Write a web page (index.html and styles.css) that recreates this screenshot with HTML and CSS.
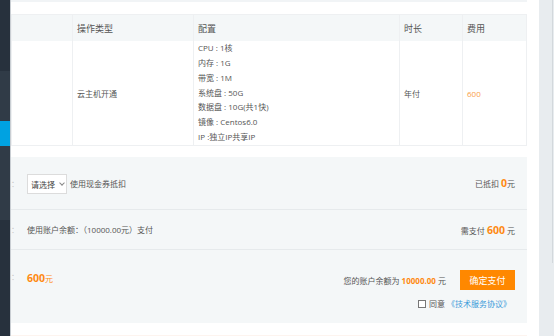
FILE: index.html
```html
<!DOCTYPE html>
<html lang="zh-CN">
<head>
    <meta charset="UTF-8">
    <meta name="viewport" content="width=device-width, initial-scale=1.0">
    <title>确认订单</title>
    <link rel="stylesheet" href="styles.css">
</head>
<body>
    <div class="layout">
        <!-- Left navigation strip -->
        <aside class="sidebar">
            <div class="nav nav-dark nav-top"></div>
            <div class="nav nav-mid nav-a"></div>
            <div class="nav nav-active"></div>
            <div class="nav nav-mid nav-b"></div>
            <div class="nav nav-dark nav-rest"></div>
        </aside>

        <!-- Order content -->
        <main class="content">
            <div class="prev-block"></div>

            <table class="order">
                <thead>
                    <tr>
                        <th class="c-id"></th>
                        <th class="c-type">操作类型</th>
                        <th class="c-conf">配置</th>
                        <th class="c-time">时长</th>
                        <th class="c-fee">费用</th>
                    </tr>
                </thead>
                <tbody>
                    <tr>
                        <td></td>
                        <td>云主机开通</td>
                        <td class="conf">
                            <p>CPU : 1核</p>
                            <p>内存 : 1G</p>
                            <p>带宽 : 1M</p>
                            <p>系统盘 : 50G</p>
                            <p>数据盘 : 10G(共1快)</p>
                            <p>镜像 : Centos6.0</p>
                            <p>IP :独立IP共享IP</p>
                        </td>
                        <td>年付</td>
                        <td class="fee">600</td>
                    </tr>
                </tbody>
            </table>

            <section class="pay">
                <div class="pay-row coupon">
                    <span class="lbl">：</span>
                    <div class="select">请选择 <span class="chev"></span></div>
                    <span class="hint">使用现金券抵扣</span>
                    <span class="right">已抵扣 <b class="num">0</b>元</span>
                </div>
                <div class="pay-row balance">
                    <span class="lbl">：</span>
                    <span class="hint">使用账户余额：（10000.00元）支付</span>
                    <span class="right">需支付 <b class="num">600</b> 元</span>
                </div>
                <div class="pay-row total">
                    <span class="lbl">：</span>
                    <span class="total-sum"><b class="num">600</b>元</span>
                    <div class="confirm">
                        <div class="confirm-line">
                            <span>您的账户余额为 <b class="bal">10000.00</b> 元</span>
                            <button class="pay-btn">确定支付</button>
                        </div>
                        <label class="agree">
                            <span class="box"></span>同意 <a href="#">《技术服务协议》</a>
                        </label>
                    </div>
                </div>
            </section>

            <div class="notice"></div>
        </main>

        <div class="gutter"><div class="thumb"></div></div>
    </div>
</body>
</html>
```

FILE: styles.css
```css
body {
    margin: 0;
    padding: 0;
    background-color: #fff;
    font-family: "Open Sans", "Noto Sans CJK SC", sans-serif;
    font-size: 8px;
    color: #555;
}
.layout {
    display: flex;
    height: 336px;
    overflow: hidden;
}
.sidebar {
    width: 10px;
    flex-shrink: 0;
    border-right: 1px solid #c9ced3;
    display: flex;
    flex-direction: column;
}
.nav-dark {
    background-color: #27313d;
}
.nav-mid {
    background-color: #303b47;
}
.nav-top {
    height: 71px;
}
.nav-a {
    height: 50px;
}
.nav-active {
    height: 25px;
    background-color: #00a2e1;
}
.nav-b {
    height: 74px;
}
.nav-rest {
    flex: 1;
}
.content {
    width: 516px;
    flex-shrink: 0;
    margin-right: 12px;
}
.prev-block {
    height: 2px;
    background-color: #f1f4f6;
}

/* order table */
.order {
    width: 100%;
    margin-top: 12px;
    border-collapse: collapse;
    table-layout: fixed;
    border: 1px solid #eef0f2;
}
.order th,
.order td {
    padding: 0 4px;
    text-align: left;
    border-left: 1px solid #eef0f2;
}
.order th {
    height: 26px;
    background-color: #f4f7f8;
    font-weight: normal;
    font-size: 9px;
    color: #555;
}
.order td {
    height: 104px;
    vertical-align: middle;
    color: #555;
}
.c-id { width: 52px; }
.c-type { width: 112px; }
.c-conf { width: 197px; }
.c-time { width: 54px; }
.conf p {
    margin: 0;
    line-height: 14.8px;
}
.order .fee {
    color: #f99d4a;
}

/* payment area */
.pay {
    margin-top: 11px;
    background-color: #f4f7f8;
}
.pay-row {
    display: flex;
    align-items: center;
    padding: 0 12px 0 0;
    color: #555;
}
.pay-row + .pay-row {
    border-top: 1px solid #e6eaec;
}
.lbl {
    width: 16px;
    color: #c8c8c8;
    flex-shrink: 0;
}
.coupon {
    height: 52px;
}
.balance {
    height: 39px;
}
.total {
    height: 73px;
    align-items: flex-start;
}
.select {
    width: 35px;
    height: 18px;
    border: 1px solid #dcdcdc;
    background-color: #fff;
    display: flex;
    align-items: center;
    padding-left: 3px;
    margin-right: 3px;
    margin-top: 2px;
    color: #444;
}
.chev {
    width: 3px;
    height: 3px;
    border-right: 1px solid #888;
    border-bottom: 1px solid #888;
    transform: rotate(45deg);
    margin: -2px 0 0 5px;
}
.right {
    margin-left: auto;
}
.num {
    color: #ff8a12;
    font-size: 10.5px;
    font-weight: bold;
}
.total .lbl,
.total-sum {
    margin-top: 21px;
}
.total-sum {
    color: #ff8a12;
}
.confirm {
    margin-left: auto;
    padding-top: 20px;
    display: flex;
    flex-direction: column;
    align-items: flex-end;
}
.confirm-line {
    display: flex;
    align-items: center;
    gap: 14px;
}
.bal {
    color: #ff8a12;
}
.pay-btn {
    width: 55px;
    height: 20px;
    border: none;
    padding: 0;
    background-color: #ff8800;
    color: #fff;
    font-family: inherit;
    font-size: 9px;
    cursor: pointer;
}
.agree {
    display: flex;
    align-items: center;
    margin-top: 8px;
    margin-right: 4px;
    color: #555;
}
.box {
    width: 6px;
    height: 6px;
    border: 1px solid #777;
    background-color: #fff;
    margin-right: 3px;
}
.agree a {
    color: #3a9ad9;
    text-decoration: none;
    margin-left: 2px;
}
.notice {
    margin-top: 12px;
    height: 4px;
    background-color: #fdf4ef;
}

/* right scroll gutter */
.gutter {
    flex: 1;
    background-color: #e8ecef;
    display: flex;
    justify-content: flex-end;
}
.thumb {
    width: 1.5px;
    height: 263px;
    margin-right: 1px;
    background-color: #d3d8dc;
}
```
